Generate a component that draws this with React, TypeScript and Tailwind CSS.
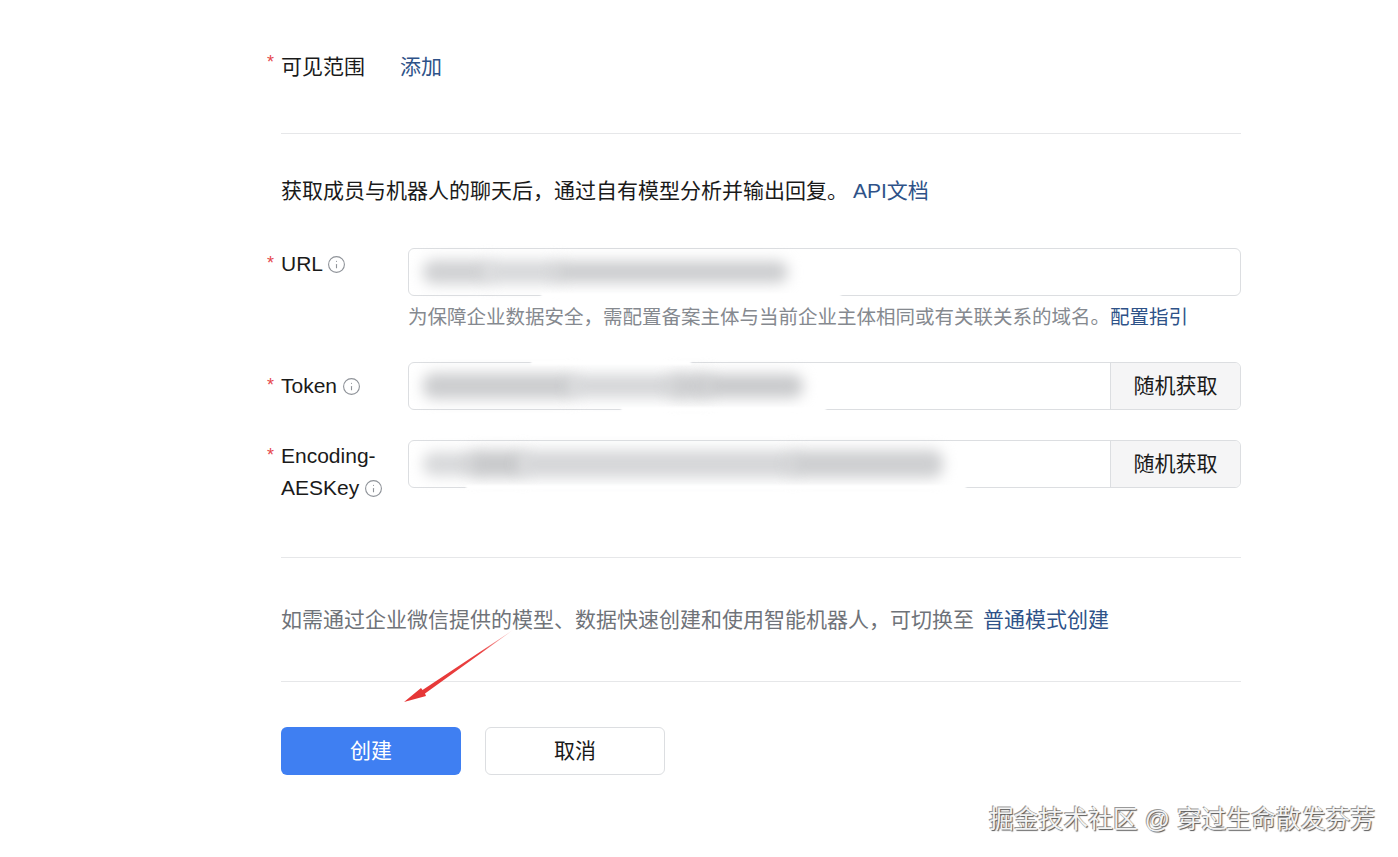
import { Info } from "lucide-react";

const FONT = "font-['Liberation_Sans','Noto_Sans_CJK_SC',sans-serif]";

function Star({ className }: { className: string }) {
  return <span className={`absolute left-[-14px] text-[18px] leading-[24px] text-[#e5484d] ${className}`}>*</span>;
}

function Tip() {
  return <Info className="inline-block ml-[-1px] w-[19px] h-[19px] text-[#8f9399] align-[-3px]" strokeWidth={1.4} />;
}

// blurred-out secret value inside an input, pieces overlap so they melt together
function Smudge({ className }: { className: string }) {
  return <div className={`flex-none mr-[-10px] rounded-[10px] blur-[7px] ${className}`} />;
}

// the blur in the picture also wiped a stretch of the input border
function Wipe({ className }: { className: string }) {
  return <div className={`absolute h-[5px] bg-white blur-[1px] ${className}`} />;
}

function Divider({ className }: { className: string }) {
  return <div className={`h-px bg-[#e6e7e9] ${className}`} />;
}

function RandomButton() {
  return (
    <button className="w-[130px] flex-none rounded-r-[5px] border-l border-[#dcdee1] bg-[#f5f5f6] text-[21px] text-[#1a1a1a]">
      随机获取
    </button>
  );
}

export default function App() {
  return (
    <div className={`relative w-[1398px] h-[857px] overflow-hidden bg-white text-[21px] text-[#1a1a1a] ${FONT}`}>
      <div className="w-[960px] ml-[281px] pt-[52px]">
        <div className="relative flex h-[30px] items-center leading-[30px]">
          <Star className="top-[-2px]" />
          <span>可见范围</span>
          <span className="ml-[35px] text-[#2e5288]">添加</span>
        </div>

        <Divider className="mt-[51px]" />

        <div className="mt-[42px] flex h-[30px] items-center leading-[30px]">
          <span>获取成员与机器人的聊天后，通过自有模型分析并输出回复。</span>
          <span className="ml-[5px] text-[#2e5288]">API文档</span>
        </div>

        <div className="mt-[42px] flex">
          <div className="relative w-[127px] flex-none pt-[1px] leading-[30px]">
            <Star className="top-[3px]" />
            URL <Tip />
          </div>
          <div className="flex-1">
            <div className="relative flex h-[48px] items-center rounded-[6px] border border-[#dcdee1] pl-[14px]">
              <Smudge className="h-[24px] w-[70px] bg-[#d0d1d3]" />
              <Smudge className="h-[24px] w-[80px] bg-[#d8d9db]" />
              <Smudge className="h-[22px] w-[235px] bg-[#cccdcf]" />
              <Wipe className="left-[132px] bottom-[-3px] w-[300px]" />
            </div>
            <p className="mt-[6px] h-[30px] whitespace-nowrap text-[19.5px] leading-[30px] text-[#85898f]">
              为保障企业数据安全，需配置备案主体与当前企业主体相同或有关联关系的域名。
              <span className="text-[#2e5288]">配置指引</span>
            </p>
          </div>
        </div>

        <div className="mt-[30px] flex">
          <div className="relative w-[127px] flex-none pt-[9px] leading-[30px]">
            <Star className="top-[11px]" />
            Token <Tip />
          </div>
          <div className="relative flex h-[48px] flex-1 rounded-[6px] border border-[#dcdee1]">
            <div className="flex flex-1 items-center pl-[14px]">
              <Smudge className="h-[26px] w-[155px] bg-[#cccdcf]" />
              <Smudge className="h-[24px] w-[110px] bg-[#d6d7d9]" />
              <Smudge className="h-[28px] w-[45px] bg-[#cdced0]" />
              <Smudge className="h-[24px] w-[100px] bg-[#c9cacc]" />
            </div>
            <RandomButton />
            <Wipe className="left-[122px] top-[-3px] w-[160px]" />
            <Wipe className="left-[212px] bottom-[-3px] w-[205px]" />
          </div>
        </div>

        <div className="mt-[30px] flex">
          <div className="relative w-[127px] flex-none leading-[32px]">
            <Star className="top-[3px]" />
            Encoding-
            <br />
            AESKey <Tip />
          </div>
          <div className="relative flex h-[48px] flex-1 rounded-[6px] border border-[#dcdee1]">
            <div className="flex flex-1 items-center pl-[14px]">
              <Smudge className="h-[24px] w-[55px] bg-[#d8d9db]" />
              <Smudge className="h-[28px] w-[60px] bg-[#c9cacc]" />
              <Smudge className="h-[28px] w-[280px] bg-[#d6d7d9]" />
              <Smudge className="h-[28px] w-[155px] bg-[#cecfd1]" />
            </div>
            <RandomButton />
            <Wipe className="left-[57px] bottom-[-3px] w-[500px]" />
          </div>
        </div>

        <Divider className="mt-[53px]" />

        <div className="mt-[47px] flex h-[30px] items-center leading-[30px] text-[#6f7379]">
          <span>如需通过企业微信提供的模型、数据快速创建和使用智能机器人，可切换至</span>
          <span className="ml-[9px] text-[#2e5288]">普通模式创建</span>
        </div>

        <Divider className="mt-[46px]" />

        <div className="mt-[45px] flex gap-[24px]">
          <button className="h-[48px] w-[180px] rounded-[6px] bg-[#3f7ff2] text-[21px] text-white">创建</button>
          <button className="h-[48px] w-[180px] rounded-[6px] border border-[#dcdee1] bg-white text-[21px] text-[#1a1a1a]">
            取消
          </button>
        </div>
      </div>

      {/* annotation arrow */}
      <svg className="absolute left-[395px] top-[625px]" width="125" height="85" viewBox="0 0 125 85">
        <defs>
          <linearGradient id="shaft" x1="118" y1="5" x2="10" y2="76" gradientUnits="userSpaceOnUse">
            <stop offset="0" stopColor="#ee4a4a" stopOpacity="0.25" />
            <stop offset="0.3" stopColor="#ea4040" />
            <stop offset="1" stopColor="#e53535" />
          </linearGradient>
        </defs>
        <path d="M118 5 L27.5 65 L26 63 L9 77 L31 71 L30 68.5 Z" fill="url(#shaft)" />
      </svg>

      {/* watermark */}
      <div className="absolute left-[989px] top-[804px] whitespace-nowrap text-[24.8px] leading-[32px] text-[#f3f3f3] [text-shadow:1px_1px_1px_#555,-1px_-1px_0_#999]">
        掘金技术社区 @ 穿过生命散发芬芳
      </div>
    </div>
  );
}
